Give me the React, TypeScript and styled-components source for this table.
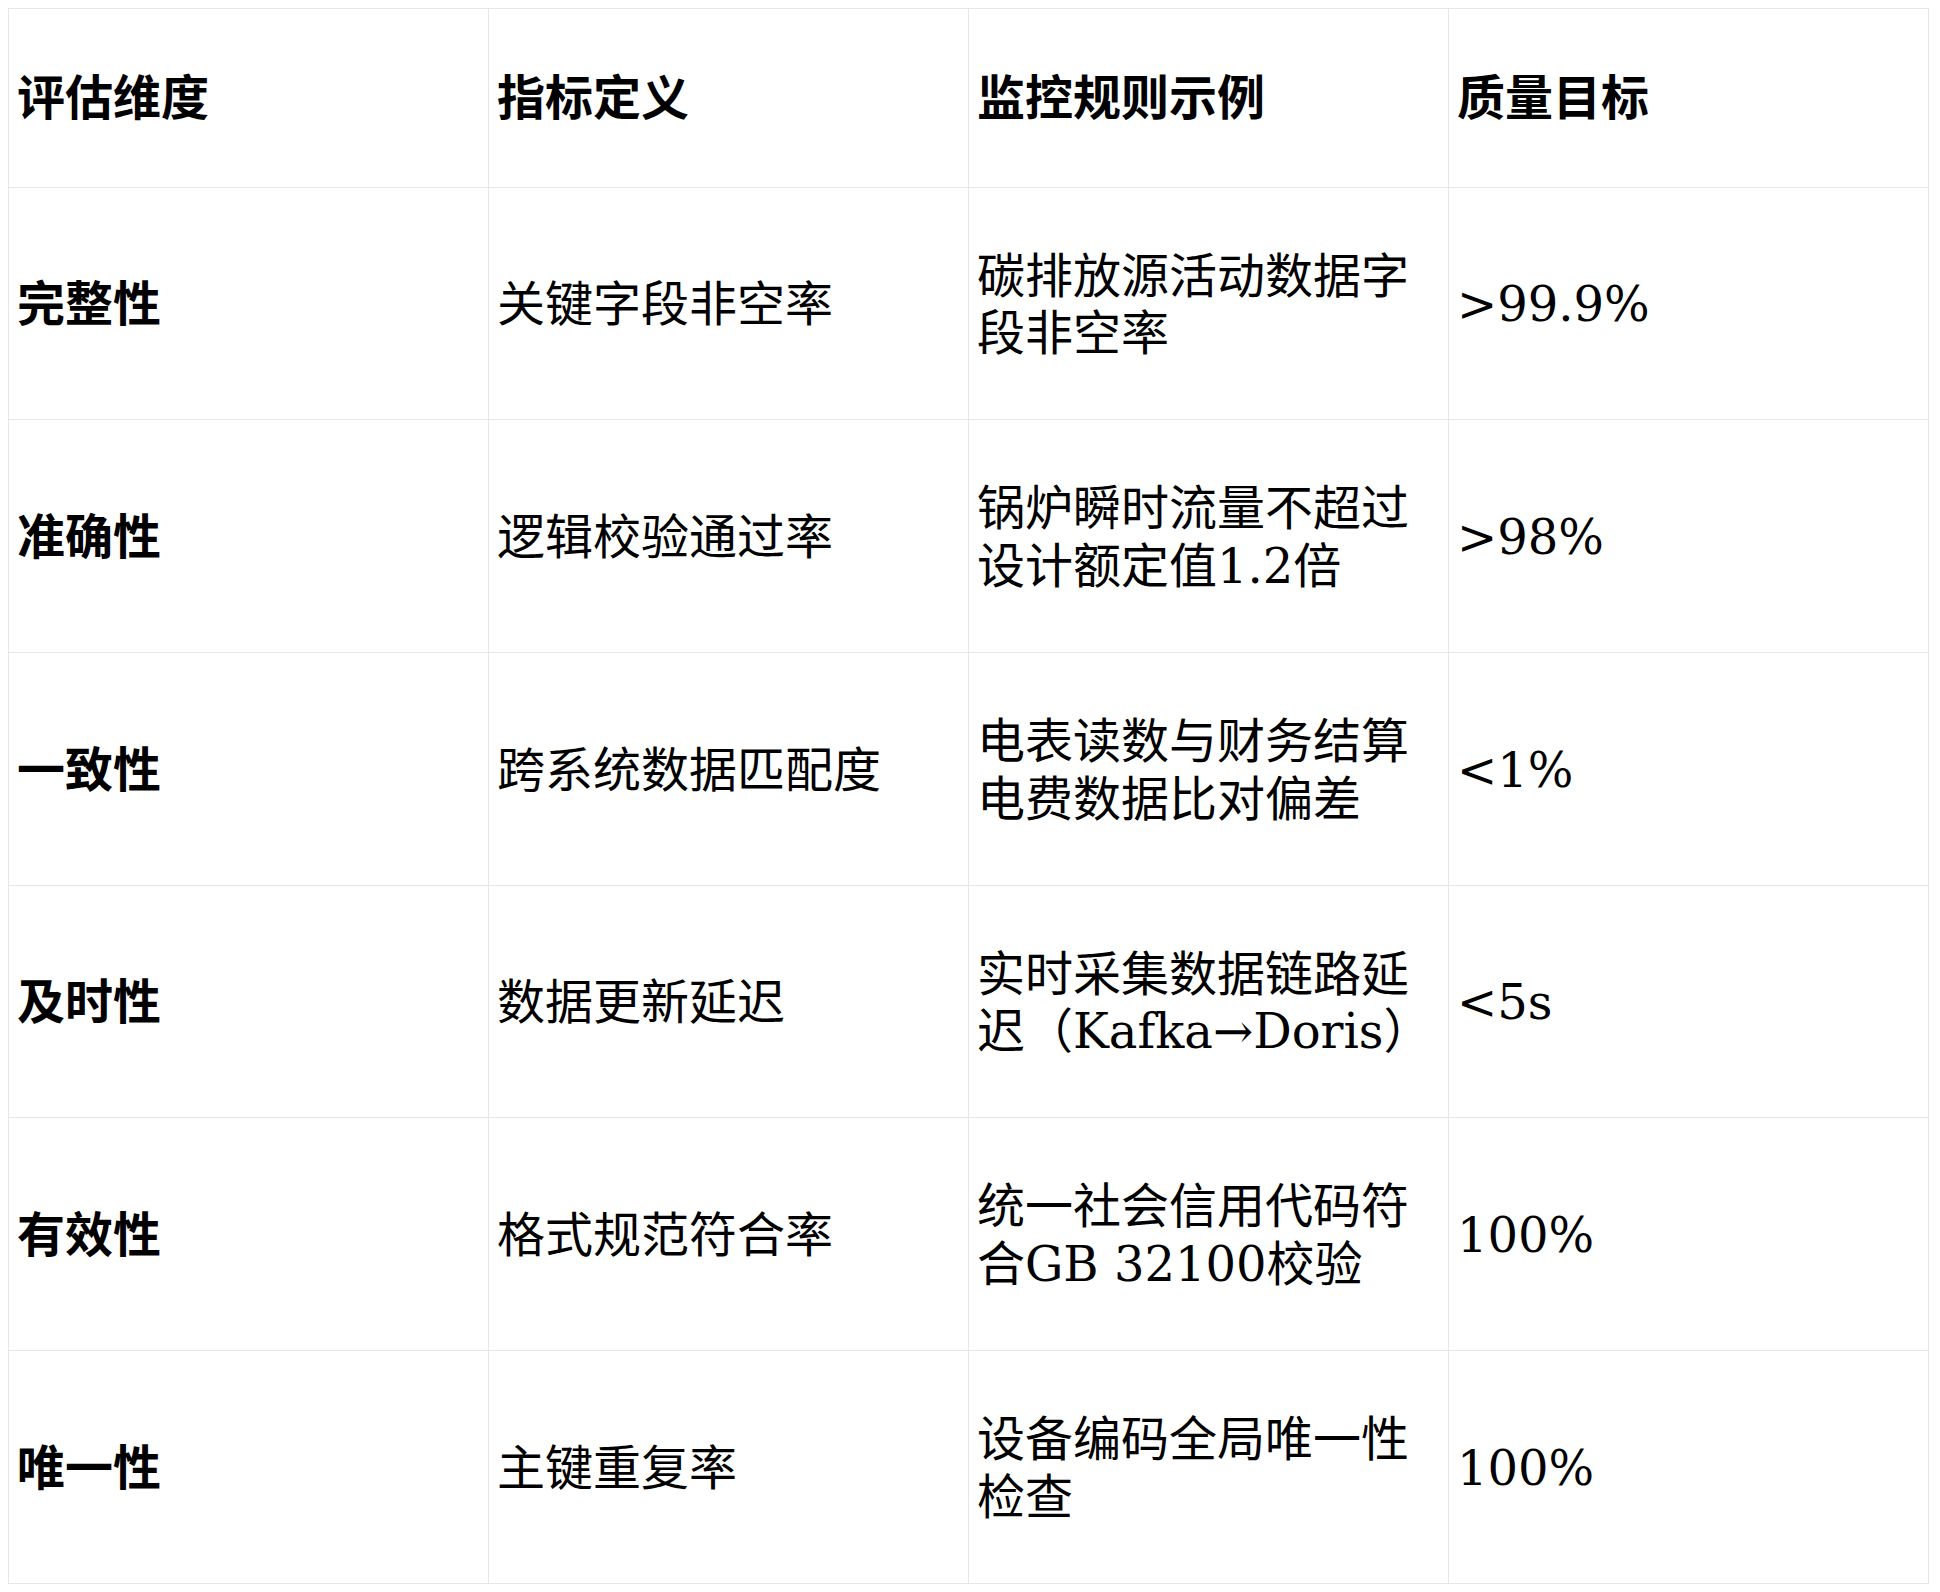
import React from 'react';
import styled, { createGlobalStyle } from 'styled-components';

const GlobalStyle = createGlobalStyle`
  body {
    margin: 8px;
    background: #ffffff;
    color: #000000;
    font-family: 'DejaVu Serif', 'Noto Sans CJK SC', serif;
  }
`;

type Row = {
  dimension: string;
  definition: string;
  rule: string;
  target: string;
};

const ROWS: Row[] = [
  { dimension: '完整性', definition: '关键字段非空率', rule: '碳排放源活动数据字段非空率', target: '>99.9%' },
  { dimension: '准确性', definition: '逻辑校验通过率', rule: '锅炉瞬时流量不超过设计额定值1.2倍', target: '>98%' },
  { dimension: '一致性', definition: '跨系统数据匹配度', rule: '电表读数与财务结算电费数据比对偏差', target: '<1%' },
  { dimension: '及时性', definition: '数据更新延迟', rule: '实时采集数据链路延迟（Kafka→Doris）', target: '<5s' },
  { dimension: '有效性', definition: '格式规范符合率', rule: '统一社会信用代码符合GB 32100校验', target: '100%' },
  { dimension: '唯一性', definition: '主键重复率', rule: '设备编码全局唯一性检查', target: '100%' },
];

const HEADERS = ['评估维度', '指标定义', '监控规则示例', '质量目标'];

export default function App() {
  return (
    <>
      <GlobalStyle />
      <QualityTable>
        <colgroup>
          <col />
          <col />
          <col />
          <col />
        </colgroup>
        <thead>
          <tr>
            {HEADERS.map((h) => (
              <HeadCell key={h}>{h}</HeadCell>
            ))}
          </tr>
        </thead>
        <tbody>
          {ROWS.map((row) => (
            <tr key={row.dimension}>
              <Cell $strong>{row.dimension}</Cell>
              <Cell>{row.definition}</Cell>
              <Cell>{row.rule}</Cell>
              <Cell>{row.target}</Cell>
            </tr>
          ))}
        </tbody>
      </QualityTable>
    </>
  );
}

const QualityTable = styled.table`
  width: 1921px;
  border-collapse: collapse;
  table-layout: fixed;
  font-size: 48px;
  line-height: 1.2;

  col {
    width: 25%;
  }
`;

const HeadCell = styled.th`
  border: 1px solid #e5e7eb;
  padding: 61px 8px 59px 8px;
  text-align: left;
  vertical-align: middle;
  font-weight: 700;
`;

const Cell = styled.td<{ $strong?: boolean }>`
  border: 1px solid #e5e7eb;
  padding: 60px 8px 56.5px 8px;
  height: 115px;
  text-align: left;
  vertical-align: middle;
  font-weight: ${(p) => (p.$strong ? 700 : 400)};
`;
